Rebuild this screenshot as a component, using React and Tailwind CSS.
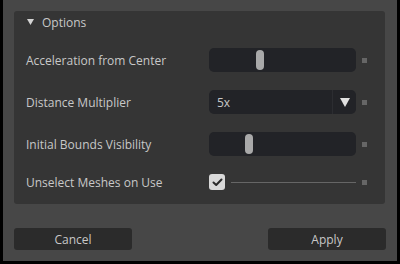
import React from "react";

const Square = () => <div className="w-[5px] h-[5px] bg-[#666666] shrink-0" />;

const Slider = ({ pos }) => (
  <div className="relative w-[147px] h-[24px] rounded-[5px] bg-[#222327]">
    <div
      className="absolute top-[2px] w-[8px] h-[20px] rounded-full bg-[#a9a9a9]"
      style={{ left: pos }}
    />
  </div>
);

const Row = ({ label, children, h = "h-[24px]" }) => (
  <div className={`flex items-center ${h}`}>
    <div className="w-[183px] text-[12px] font-medium text-[#c8c8c8] leading-none pt-[1px]">{label}</div>
    <div className="w-[147px] flex items-center">{children}</div>
    <div className="ml-[6px]">
      <Square />
    </div>
  </div>
);

export default function App() {
  return (
    <div
      className="w-[400px] h-[264px] bg-black"
      style={{ fontFamily: '"Open Sans", "Noto Sans", sans-serif' }}
    >
      <div className="ml-[3px] w-[394px] h-[261px] bg-[#474747] flex flex-col pt-[11px] px-[11px]">
        <div className="w-[371px] h-[193px] bg-[#353535] rounded-[3px] pl-[12px] flex flex-col">
          <div className="h-[22px] flex items-center">
            <svg width="7" height="6" viewBox="0 0 7 6" className="ml-[1px]">
              <polygon points="0,0 7,0 3.5,6" fill="#d4d4d4" />
            </svg>
            <span className="ml-[8px] text-[12px] font-medium text-[#c8c8c8] leading-none pt-[1px]">Options</span>
          </div>
          <div className="mt-[15px] flex flex-col gap-[18px]">
            <Row label="Acceleration from Center">
              <Slider pos={47} />
            </Row>
            <Row label="Distance Multiplier">
              <div className="w-[147px] h-[24px] rounded-[5px] bg-[#222327] flex">
                <div className="flex-1 flex items-center pl-[8px] text-[12px] font-medium text-[#c8c8c8] leading-none pt-[1px]">
                  5x
                </div>
                <div className="w-[24px] border-l border-[#2c2d31] flex items-center justify-center">
                  <svg width="10" height="9" viewBox="0 0 10 9">
                    <polygon points="0,0 10,0 5,9" fill="#e0e0e0" />
                  </svg>
                </div>
              </div>
            </Row>
            <Row label="Initial Bounds Visibility">
              <Slider pos={36} />
            </Row>
            <Row label="Unselect Meshes on Use" h="h-[16px]">
              <div className="w-[16px] h-[16px] rounded-[3px] bg-[#d9d9d9] flex items-center justify-center shrink-0">
                <svg width="11" height="9" viewBox="0 0 11 9">
                  <polyline points="1.5,4.5 4.2,7 9.5,1.5" fill="none" stroke="#2a2a2a" strokeWidth="2" strokeLinecap="round" strokeLinejoin="round" />
                </svg>
              </div>
              <div className="ml-[6px] flex-1 h-px bg-[#666666]" />
            </Row>
          </div>
        </div>
        <div className="mt-[24px] flex justify-between">
          <button className="w-[118px] h-[22px] rounded-[3px] bg-[#2b2b2b] text-[12px] font-medium text-[#c8c8c8] leading-none pt-[1px]">
            Cancel
          </button>
          <button className="w-[118px] h-[22px] rounded-[3px] bg-[#2b2b2b] text-[12px] font-medium text-[#c8c8c8] leading-none pt-[1px]">
            Apply
          </button>
        </div>
      </div>
    </div>
  );
}
